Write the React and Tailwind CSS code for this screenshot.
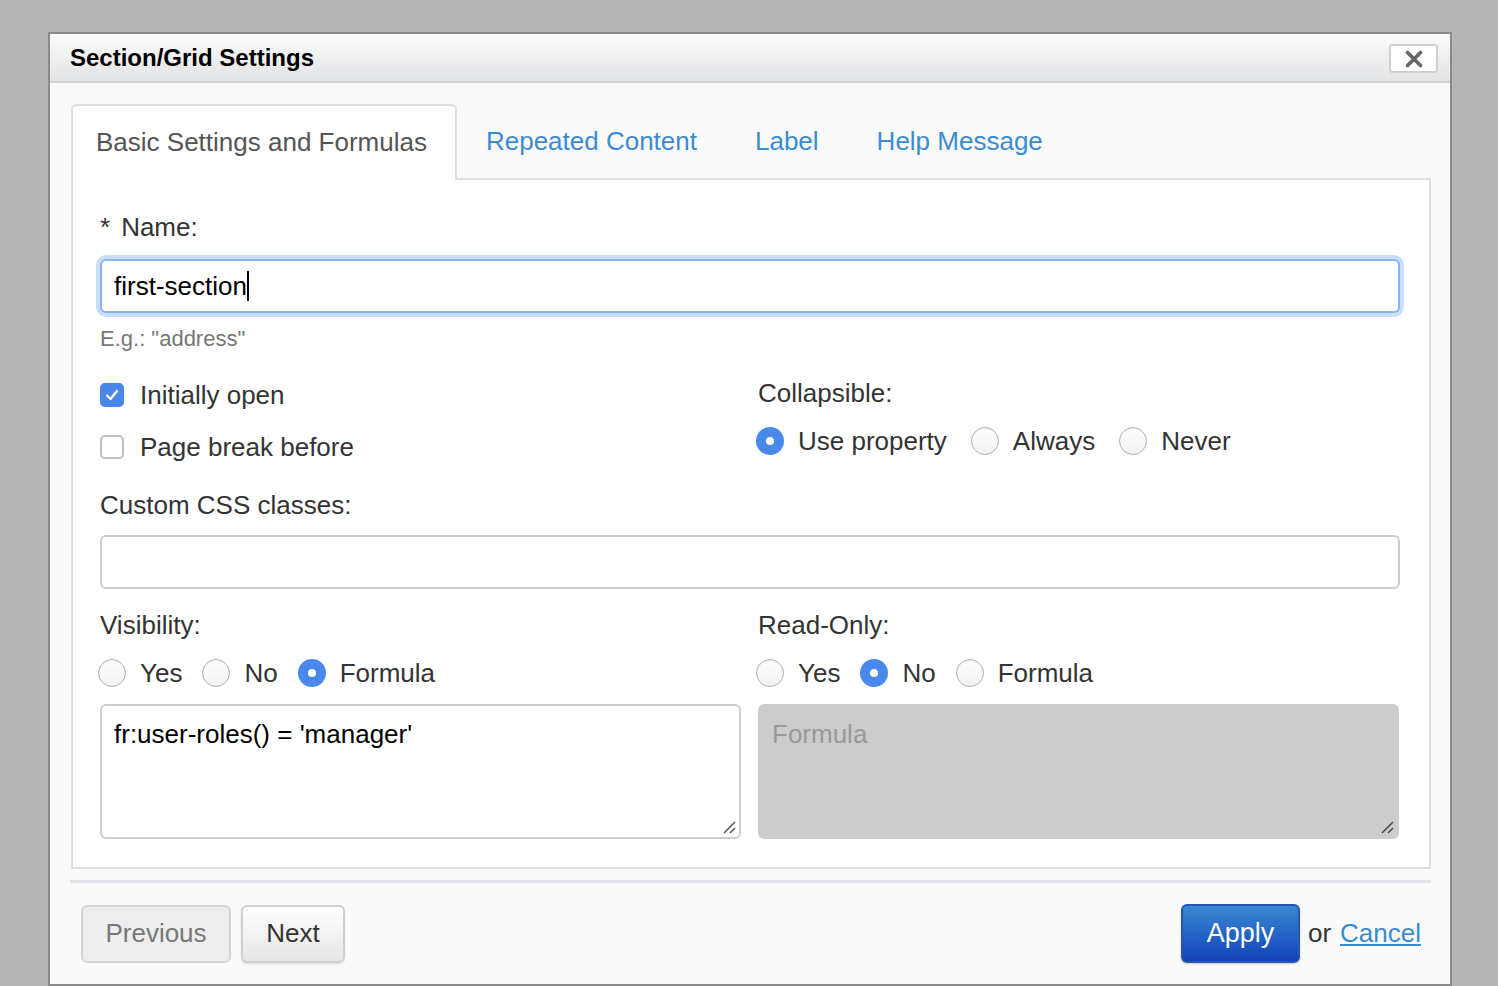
import React from "react";

const font = { fontFamily: '"Liberation Sans", Arial, Helvetica, sans-serif' };

function Radio({ checked }) {
  if (checked) {
    return (
      <span className="w-[28px] h-[28px] rounded-full bg-[#4a89ec] flex items-center justify-center shrink-0">
        <span className="w-[8px] h-[8px] rounded-full bg-white" />
      </span>
    );
  }
  return (
    <span className="w-[28px] h-[28px] rounded-full border border-[#b0b0b0] bg-gradient-to-b from-white to-[#f2f2f2] shadow-[inset_0_1px_1px_rgba(0,0,0,0.06)] shrink-0" />
  );
}

function RadioGroup({ items, selected, wide }) {
  return (
    <div className="flex items-center h-[30px] -ml-[2px]">
      {items.map((it, i) => (
        <label key={it} className={`flex items-center ${i > 0 ? (wide ? "ml-[24px]" : "ml-[20px]") : ""}`}>
          <Radio checked={i === selected} />
          <span className="ml-[14px] text-[26px] leading-[30px] text-[#333]">{it}</span>
        </label>
      ))}
    </div>
  );
}

function Checkbox({ checked, label }) {
  return (
    <div className="flex items-center h-[30px]">
      {checked ? (
        <span className="w-[24px] h-[24px] rounded-[5px] bg-[#4a86e8] flex items-center justify-center">
          <svg width="16" height="16" viewBox="0 0 16 16">
            <path d="M3 8.5 L6.5 12 L13 4" fill="none" stroke="white" strokeWidth="2.4" strokeLinecap="round" strokeLinejoin="round" />
          </svg>
        </span>
      ) : (
        <span className="w-[24px] h-[24px] rounded-[5px] border-2 border-[#bfbfbf] bg-white" />
      )}
      <span className="ml-[16px] text-[26px] leading-[30px] text-[#333]">{label}</span>
    </div>
  );
}

function ResizeHandle({ color = "#555" }) {
  return (
    <svg className="absolute right-[3px] bottom-[3px]" width="14" height="14" viewBox="0 0 14 14">
      <path d="M2 13 L13 2 M8 13 L13 8" stroke={color} strokeWidth="1.5" fill="none" />
    </svg>
  );
}

export default function App() {
  return (
    <div className="min-h-[986px] bg-[#b6b6b6] pt-[32px] pl-[48px] overflow-hidden" style={font}>
      <div className="w-[1404px] h-[954px] border-2 border-[#8a8a8a] bg-[#fafafa] flex flex-col">
        {/* Header */}
        <div className="h-[49px] shrink-0 border-b-2 border-[#d2d2d2] bg-gradient-to-b from-[#fcfcfc] to-[#e2e3e5] flex items-center justify-between pl-[20px] pr-[12px]">
          <span className="text-[24px] font-bold text-black leading-[28px]">Section/Grid Settings</span>
          <button className="w-[49px] h-[29px] bg-white border-2 border-[#cfcfcf] rounded-[3px] flex items-center justify-center mt-[2px]">
            <svg width="18" height="18" viewBox="0 0 18 18">
              <path d="M2.5 2.5 L15.5 15.5 M15.5 2.5 L2.5 15.5" stroke="#666" strokeWidth="3.6" strokeLinecap="round" />
            </svg>
          </button>
        </div>

        {/* Body */}
        <div className="pl-[21px] pr-[19px] pt-[21px]">
          {/* Tabs */}
          <div className="flex h-[76px] relative z-10 -mb-[2px]">
            <div className="h-[76px] bg-white border-2 border-b-0 border-[#dedede] rounded-t-[6px] pl-[23px] pr-[28px] pb-[3px] flex items-center">
              <span className="text-[26px] leading-[30px] text-[#555]">Basic Settings and Formulas</span>
            </div>
            {["Repeated Content", "Label", "Help Message"].map((t) => (
              <div key={t} className="h-[74px] px-[29px] flex items-center">
                <span className="text-[26px] leading-[30px] text-[#3a8bd2]">{t}</span>
              </div>
            ))}
          </div>

          {/* Panel */}
          <div className="h-[691px] border-2 border-[#dedede] bg-white pl-[27px] pr-[29px] pt-[32px]">
            <div className="text-[26px] leading-[30px] text-[#333]">
              <span className="mr-[11px]">*</span>Name:
            </div>
            <div className="mt-[17px] h-[54px] rounded-[6px] border-2 border-[#8ab4ef] bg-white shadow-[0_0_0_4px_#c9ddf8] flex items-center pl-[12px]">
              <span className="text-[26px] leading-[30px] text-black">first-section</span>
              <span className="w-[2px] h-[30px] bg-black" />
            </div>
            <div className="mt-[13px] text-[22px] leading-[26px] text-[#777]">E.g.: "address"</div>

            <div className="mt-[26px] grid grid-cols-[641px_641px] gap-x-[17px]">
              <div className="pt-[2px] flex flex-col gap-[22px]">
                <Checkbox checked label="Initially open" />
                <Checkbox label="Page break before" />
              </div>
              <div className="flex flex-col gap-[18px]">
                <div className="text-[26px] leading-[30px] text-[#333]">Collapsible:</div>
                <RadioGroup items={["Use property", "Always", "Never"]} selected={0} wide />
              </div>
            </div>

            <div className="mt-[28px] text-[26px] leading-[30px] text-[#333]">Custom CSS classes:</div>
            <div className="mt-[15px] h-[54px] rounded-[6px] border-2 border-[#cdcdcd] bg-white" />

            <div className="mt-[21px] grid grid-cols-[641px_641px] gap-x-[17px]">
              <div>
                <div className="text-[26px] leading-[30px] text-[#333]">Visibility:</div>
                <div className="mt-[18px]">
                  <RadioGroup items={["Yes", "No", "Formula"]} selected={2} />
                </div>
                <div className="mt-[16px] h-[135px] rounded-[6px] border-2 border-[#cdcdcd] bg-white relative pl-[12px] pt-[13px]">
                  <span className="text-[26px] leading-[30px] text-black">fr:user-roles() = 'manager'</span>
                  <ResizeHandle />
                </div>
              </div>
              <div>
                <div className="text-[26px] leading-[30px] text-[#333]">Read-Only:</div>
                <div className="mt-[18px]">
                  <RadioGroup items={["Yes", "No", "Formula"]} selected={1} />
                </div>
                <div className="mt-[16px] h-[135px] rounded-[6px] border-2 border-[#cccccc] bg-[#cccccc] relative pl-[12px] pt-[13px]">
                  <span className="text-[26px] leading-[30px] text-[#999]">Formula</span>
                  <ResizeHandle color="#444" />
                </div>
              </div>
            </div>
          </div>

          {/* Separator */}
          <div className="mt-[11px] h-[3px] bg-[#e0e0ee] -ml-[1px]" />

          {/* Footer */}
          <div className="mt-[21px] flex items-center justify-between pl-[10px] pr-[10px]">
            <div className="flex items-center gap-[10px]">
              <button className="w-[150px] h-[58px] rounded-[6px] border-2 border-[#d6d6d6] bg-[#eeeeee] text-[26px] text-[#777]">
                Previous
              </button>
              <button className="w-[104px] h-[58px] rounded-[6px] border-2 border-[#cfcfcf] bg-gradient-to-b from-white to-[#e6e6e6] text-[26px] text-[#333] shadow-[0_1px_2px_rgba(0,0,0,0.12)]">
                Next
              </button>
            </div>
            <div className="flex items-center">
              <button className="w-[119px] h-[59px] rounded-[6px] border-2 border-[#2557b0] bg-gradient-to-b from-[#3b87d0] to-[#1740bb] text-[27px] text-white shadow-[0_1px_2px_rgba(0,0,0,0.2)]">
                Apply
              </button>
              <span className="ml-[8px] text-[26px] text-[#333]">or</span>
              <a className="ml-[9px] text-[26px] text-[#3a8bd2] underline underline-offset-[2px]" href="#">
                Cancel
              </a>
            </div>
          </div>
        </div>
      </div>
    </div>
  );
}
